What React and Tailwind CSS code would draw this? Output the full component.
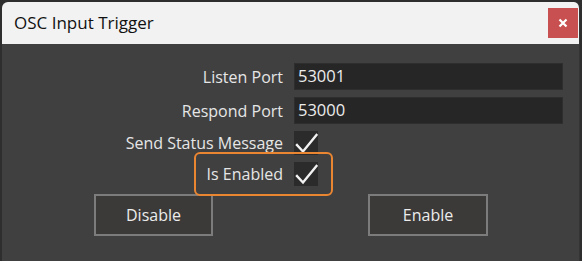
import React from "react";

function Check() {
  return (
    <svg width="24" height="24" viewBox="0 0 24 24" className="block">
      <path d="M3 14 L9 20.5 L22.5 4" fill="none" stroke="#f2f2f2" strokeWidth="2.4" strokeLinecap="square" strokeLinejoin="miter" />
    </svg>
  );
}

export default function App() {
  const font = { fontFamily: '"Segoe UI", "Open Sans", "Noto Sans", sans-serif' };
  return (
    <div className="w-[582px] h-[261px] bg-[#2e2e2e] p-[2px] pb-0 overflow-hidden" style={font}>
      <div className="h-full flex flex-col rounded-t-[6px] overflow-hidden bg-[#404040] border-r-[1px] border-[#343434]">
        <div className="h-[42px] bg-[#f2f2f2] flex items-center pl-[12px] pr-[1px] shrink-0">
          <div className="flex-1 text-[17px] text-[#111] leading-none pb-[1px]">OSC Input Trigger</div>
          <div className="w-[30px] h-[30px] bg-[#c85050] flex items-center justify-center">
            <svg width="10" height="10" viewBox="0 0 10 10">
              <path d="M1.5 1.5 L8.5 8.5 M8.5 1.5 L1.5 8.5" stroke="#fff" strokeWidth="2.2" />
            </svg>
          </div>
        </div>
        <div className="relative flex-1 pt-[19px]">
          <div className="grid grid-cols-[281px_269px] gap-x-[11px] gap-y-[7px] items-center">
            <div className="text-right text-[16px] text-[#e6e6e6] leading-none">Listen Port</div>
            <div className="h-[27px] bg-[#262626] border border-[#2e2e2e] flex items-center pl-[3px] text-[16.5px] text-[#ececec]">53001</div>
            <div className="text-right text-[16px] text-[#e6e6e6] leading-none">Respond Port</div>
            <div className="h-[27px] bg-[#262626] border border-[#2e2e2e] flex items-center pl-[3px] text-[16.5px] text-[#ececec]">53000</div>
            <div className="text-right text-[16px] text-[#e6e6e6] leading-none">Send Status Message</div>
            <div className="w-[24px] h-[24px] bg-[#2b2b2b]"><Check /></div>
            <div className="text-right text-[16px] text-[#e6e6e6] leading-none">Is Enabled</div>
            <div className="w-[24px] h-[24px] bg-[#2b2b2b]"><Check /></div>
          </div>
          <div className="flex mt-[8px] pl-[92px] gap-[155px]">
            <div className="w-[119px] h-[42px] border-2 border-[#7c7c7c] bg-[#3b3a38] flex items-center justify-center text-[16px] text-[#ececec]">Disable</div>
            <div className="w-[120px] h-[42px] border-2 border-[#7c7c7c] bg-[#3b3a38] flex items-center justify-center text-[16px] text-[#ececec]">Enable</div>
          </div>
          <div className="absolute left-[192px] top-[108px] w-[139px] h-[44px] border-[2.5px] border-[#ea8532] rounded-[6px]" />
        </div>
      </div>
    </div>
  );
}
